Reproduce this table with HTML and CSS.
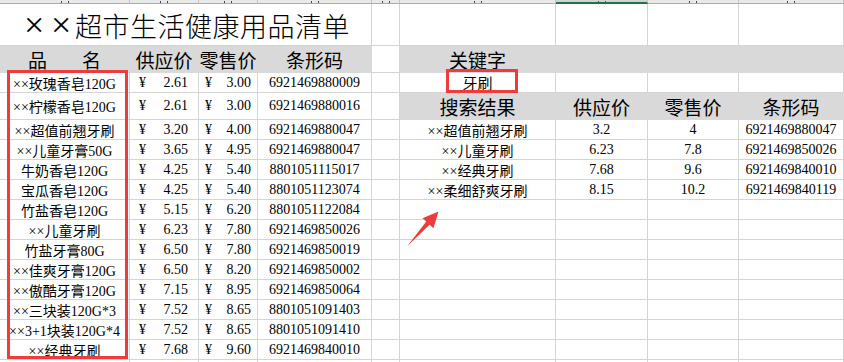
FILE: index.html
```html
<!DOCTYPE html>
<html lang="zh-CN">
<head>
<meta charset="utf-8">
<title>超市生活健康用品清单</title>
<link rel="stylesheet" href="styles.css">
</head>
<body>
<div class="page">
  <div class="sheet">
    <!-- column header strip (scrolled out of view, only the letter feet show) -->
    <div class="hd"></div>
    <div class="hd"></div>
    <div class="hd"></div>
    <div class="hd"></div>
    <div class="hd"></div>
    <div class="hd"></div>
    <div class="hd hd-sel"></div>
    <div class="hd"></div>
    <div class="hd"></div>

    <!-- row 1 -->
    <div class="c title"><span class="x">×</span><span class="x">×</span>超市生活健康用品清单</div>
    <div class="c"></div>
    <div class="c"></div>
    <div class="c"></div>
    <div class="c"></div>
    <div class="c"></div>

    <!-- row 2 -->
    <div class="c g th th-name"><span>品</span><span>名</span></div>
    <div class="c g th">供应价</div>
    <div class="c g th">零售价</div>
    <div class="c g th">条形码</div>
    <div class="c"></div>
    <div class="c g th">关键字</div>
    <div class="c g"></div>
    <div class="c g"></div>
    <div class="c g"></div>

    <!-- row 3 -->
    <div class="c ctr">××玫瑰香皂120G</div>
    <div class="c acc acc-b"><span>¥</span><span>2.61</span></div>
    <div class="c acc acc-c"><span>¥</span><span>3.00</span></div>
    <div class="c ctr">6921469880009</div>
    <div class="c"></div>
    <div class="c ctr key">牙刷</div>
    <div class="c"></div>
    <div class="c"></div>
    <div class="c"></div>

    <!-- row 4 -->
    <div class="c ctr">××柠檬香皂120G</div>
    <div class="c acc acc-b"><span>¥</span><span>2.61</span></div>
    <div class="c acc acc-c"><span>¥</span><span>3.00</span></div>
    <div class="c ctr">6921469880016</div>
    <div class="c"></div>
    <div class="c g th">搜索结果</div>
    <div class="c g th">供应价</div>
    <div class="c g th">零售价</div>
    <div class="c g th">条形码</div>

    <!-- row 5 -->
    <div class="c ctr">××超值前翘牙刷</div>
    <div class="c acc acc-b"><span>¥</span><span>3.20</span></div>
    <div class="c acc acc-c"><span>¥</span><span>4.00</span></div>
    <div class="c ctr">6921469880047</div>
    <div class="c"></div>
    <div class="c ctr">××超值前翘牙刷</div>
    <div class="c ctr">3.2</div>
    <div class="c ctr">4</div>
    <div class="c ctr">6921469880047</div>

    <!-- row 6 -->
    <div class="c ctr">××儿童牙膏50G</div>
    <div class="c acc acc-b"><span>¥</span><span>3.65</span></div>
    <div class="c acc acc-c"><span>¥</span><span>4.95</span></div>
    <div class="c ctr">6921469880047</div>
    <div class="c"></div>
    <div class="c ctr">××儿童牙刷</div>
    <div class="c ctr">6.23</div>
    <div class="c ctr">7.8</div>
    <div class="c ctr">6921469850026</div>

    <!-- row 7 -->
    <div class="c ctr">牛奶香皂120G</div>
    <div class="c acc acc-b"><span>¥</span><span>4.25</span></div>
    <div class="c acc acc-c"><span>¥</span><span>5.40</span></div>
    <div class="c ctr">8801051115017</div>
    <div class="c"></div>
    <div class="c ctr">××经典牙刷</div>
    <div class="c ctr">7.68</div>
    <div class="c ctr">9.6</div>
    <div class="c ctr">6921469840010</div>

    <!-- row 8 -->
    <div class="c ctr">宝瓜香皂120G</div>
    <div class="c acc acc-b"><span>¥</span><span>4.25</span></div>
    <div class="c acc acc-c"><span>¥</span><span>5.40</span></div>
    <div class="c ctr">8801051123074</div>
    <div class="c"></div>
    <div class="c ctr">××柔细舒爽牙刷</div>
    <div class="c ctr">8.15</div>
    <div class="c ctr">10.2</div>
    <div class="c ctr">6921469840119</div>

    <!-- row 9 -->
    <div class="c ctr">竹盐香皂120G</div>
    <div class="c acc acc-b"><span>¥</span><span>5.15</span></div>
    <div class="c acc acc-c"><span>¥</span><span>6.20</span></div>
    <div class="c ctr">8801051122084</div>
    <div class="c"></div><div class="c"></div><div class="c"></div><div class="c"></div><div class="c"></div>

    <!-- row 10 -->
    <div class="c ctr">××儿童牙刷</div>
    <div class="c acc acc-b"><span>¥</span><span>6.23</span></div>
    <div class="c acc acc-c"><span>¥</span><span>7.80</span></div>
    <div class="c ctr">6921469850026</div>
    <div class="c"></div><div class="c"></div><div class="c"></div><div class="c"></div><div class="c"></div>

    <!-- row 11 -->
    <div class="c ctr">竹盐牙膏80G</div>
    <div class="c acc acc-b"><span>¥</span><span>6.50</span></div>
    <div class="c acc acc-c"><span>¥</span><span>7.80</span></div>
    <div class="c ctr">6921469850019</div>
    <div class="c"></div><div class="c"></div><div class="c"></div><div class="c"></div><div class="c"></div>

    <!-- row 12 -->
    <div class="c ctr">××佳爽牙膏120G</div>
    <div class="c acc acc-b"><span>¥</span><span>6.50</span></div>
    <div class="c acc acc-c"><span>¥</span><span>8.20</span></div>
    <div class="c ctr">6921469850002</div>
    <div class="c"></div><div class="c"></div><div class="c"></div><div class="c"></div><div class="c"></div>

    <!-- row 13 -->
    <div class="c ctr">××傲酷牙膏120G</div>
    <div class="c acc acc-b"><span>¥</span><span>7.15</span></div>
    <div class="c acc acc-c"><span>¥</span><span>8.95</span></div>
    <div class="c ctr">6921469850064</div>
    <div class="c"></div><div class="c"></div><div class="c"></div><div class="c"></div><div class="c"></div>

    <!-- row 14 -->
    <div class="c ctr">××三块装120G*3</div>
    <div class="c acc acc-b"><span>¥</span><span>7.52</span></div>
    <div class="c acc acc-c"><span>¥</span><span>8.65</span></div>
    <div class="c ctr">8801051091403</div>
    <div class="c"></div><div class="c"></div><div class="c"></div><div class="c"></div><div class="c"></div>

    <!-- row 15 -->
    <div class="c ctr">××3+1块装120G*4</div>
    <div class="c acc acc-b"><span>¥</span><span>7.52</span></div>
    <div class="c acc acc-c"><span>¥</span><span>8.65</span></div>
    <div class="c ctr">8801051091410</div>
    <div class="c"></div><div class="c"></div><div class="c"></div><div class="c"></div><div class="c"></div>

    <!-- row 16 -->
    <div class="c ctr">××经典牙刷</div>
    <div class="c acc acc-b"><span>¥</span><span>7.68</span></div>
    <div class="c acc acc-c"><span>¥</span><span>9.60</span></div>
    <div class="c ctr">6921469840010</div>
    <div class="c"></div><div class="c"></div><div class="c"></div><div class="c"></div><div class="c"></div>

    <!-- row 17 (partially visible) -->
    <div class="c"></div><div class="c"></div><div class="c"></div><div class="c"></div><div class="c"></div>
    <div class="c"></div><div class="c"></div><div class="c"></div><div class="c"></div>
  </div>

  <!-- annotations drawn over the sheet -->
  <div class="mark mark-list"></div>
  <div class="mark mark-key"></div>
  <svg class="arrow" width="50" height="50" viewBox="400 205 50 50" aria-hidden="true">
    <polygon points="438.5,211.5 422.5,218.2 426.3,221.6 407,246.5 429.6,224.7 433.4,228.2" fill="#ee3b3b"/>
  </svg>
</div>
</body>
</html>
```

FILE: styles.css
```css
html, body {
  margin: 0;
  padding: 0;
  background: #ffffff;
}

body {
  width: 844px;
  height: 362px;
  overflow: hidden;
  font-family: "Liberation Serif", "Noto Sans CJK SC", serif;
  font-size: 14px;
  color: #000;
}

.page {
  position: relative;
  width: 844px;
  height: 362px;
  overflow: hidden;
}

.sheet {
  display: grid;
  grid-template-columns: 130px 69px 59px 114px 28px 156px 92px 91px 105px;
  grid-template-rows: 4px 42px 27px 20px 27px repeat(13, 20px);
}

/* column header strip (mostly scrolled out of view) */
.hd {
  box-sizing: border-box;
  background: #e9e9e9;
  border-right: 1px solid #c4c4c4;
  border-bottom: 1px solid #acacac;
  display: flex;
  align-items: flex-end;
  justify-content: center;
  overflow: hidden;
}

.hd::after {
  content: "";
  width: 6px;
  height: 2px;
  border-left: 1px solid #444;
  border-right: 1px solid #444;
}

.hd-sel {
  background: #d2d2d2;
  border-bottom: 2px solid #217346;
}

.hd-sel::after {
  height: 1px;
  border-color: #217346;
}

/* cells */
.c {
  box-sizing: border-box;
  border-right: 1px solid #d4d4d4;
  border-bottom: 1px solid #d4d4d4;
  display: flex;
  align-items: center;
  white-space: nowrap;
  overflow: visible;
  min-width: 0;
}

.g {
  background: #d9d9d9;
  border-color: #d9d9d9;
}

.ctr {
  justify-content: center;
}

.title {
  grid-column: span 4;
  justify-content: center;
  font-family: "Noto Sans CJK SC", sans-serif;
  font-size: 27px;
  letter-spacing: 0.5px;
  font-weight: 300;
  padding-top: 1px;
}

.title .x {
  display: inline-block;
  width: 27px;
  line-height: 1;
  text-align: center;
  font-family: "Liberation Serif", serif;
  font-size: 36px;
  font-weight: 400;
}

.th {
  justify-content: center;
  font-family: "Noto Sans CJK SC", sans-serif;
  font-size: 19px;
}

.th-name {
  justify-content: space-between;
  padding: 0 28px 0 28px;
}

.acc {
  justify-content: space-between;
}

.acc-b {
  padding: 0 10px 0 9px;
}

.acc-c {
  padding: 0 6px 0 6px;
}

.key {
  font-size: 15px;
}

/* red annotation boxes */
.mark {
  position: absolute;
  box-sizing: border-box;
  border: 3px solid #ee3b3b;
}

.mark-list {
  left: 7px;
  top: 70px;
  width: 121px;
  height: 289px;
}

.mark-key {
  left: 446px;
  top: 69px;
  width: 72px;
  height: 24px;
}

.arrow {
  position: absolute;
  left: 400px;
  top: 205px;
}
```
